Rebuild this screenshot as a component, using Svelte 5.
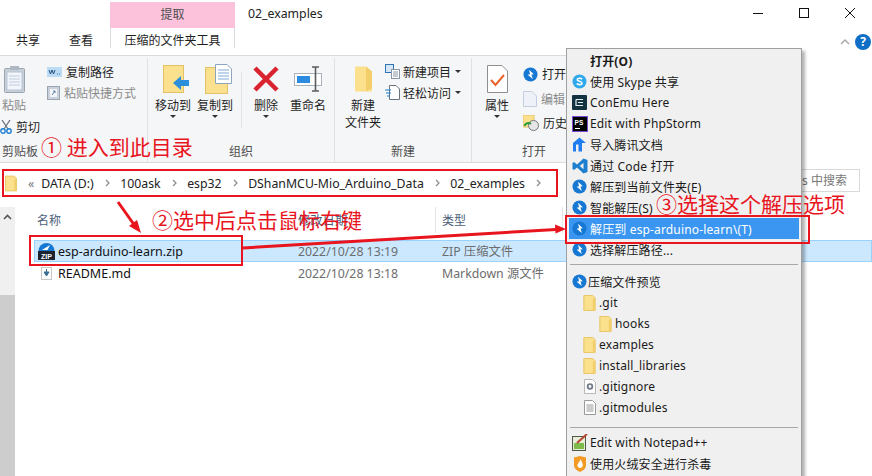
<script>
	const menuTop = [
		{ icon: "none", text: "打开(O)", bold: true },
		{ icon: "skype", text: "使用 Skype 共享" },
		{ icon: "conemu", text: "ConEmu Here" },
		{ icon: "storm", text: "Edit with PhpStorm" },
		{ icon: "tdocs", text: "导入腾讯文档" },
		{ icon: "code", text: "通过 Code 打开" },
		{ icon: "bz", text: "解压到当前文件夹(E)" },
		{ icon: "bz", text: "智能解压(S)" },
		{ icon: "bz", text: "解压到 esp-arduino-learn\\(T)", active: true },
		{ icon: "bz", text: "选择解压路径..." },
	];
	const preview = [
		{ icon: "folder", text: ".git", level: 1 },
		{ icon: "folder", text: "hooks", level: 2 },
		{ icon: "folder", text: "examples", level: 1 },
		{ icon: "folder", text: "install_libraries", level: 1 },
		{ icon: "gear", text: ".gitignore", level: 1 },
		{ icon: "doc", text: ".gitmodules", level: 1 },
	];
	const crumbs = ["DATA (D:)", "100ask", "esp32", "DShanMCU-Mio_Arduino_Data", "02_examples"];
</script>

{#snippet bz(size)}
	<svg width={size} height={size} viewBox="0 0 16 16">
		<circle cx="8" cy="8" r="7.5" fill="#1678d2" />
		<path d="M6.500 3 11.500 7.800 9 8 10.500 12.800 5 8.200 7.500 7.800Z" fill="#fff" />
	</svg>
{/snippet}

{#snippet folder(w, h)}
	<svg width={w} height={h} viewBox="0 0 13 17">
		<path d="M.5.5H10L12.5 3V16.5H.5Z" fill="#fbe08e" stroke="#e8c45e" />
		<path d="M10 4H12.5V16.5H10Z" fill="#f3cf6c" />
	</svg>
{/snippet}

{#snippet menuIcon(name)}
	{#if name === "bz"}
		{@render bz(15)}
	{:else if name === "skype"}
		<svg width="15" height="15" viewBox="0 0 15 15">
			<circle cx="7.500" cy="7.500" r="7" fill="#2fa9ec" />
			<path d="M10 5.200C9 3.900 5.200 3.900 5.200 5.700 5.200 7.600 10 7 10 9.200 10 11 6 11.100 4.800 9.600" fill="none" stroke="#fff" stroke-width="1.600" />
		</svg>
	{:else if name === "conemu"}
		<svg width="15" height="15" viewBox="0 0 15 15">
			<rect width="15" height="15" rx="1" fill="#12333f" />
			<path d="M4 4.500H11M4 4.500V10.500H11M6 7.500H11" fill="none" stroke="#e6f0f2" stroke-width="1.200" />
		</svg>
	{:else if name === "storm"}
		<svg width="16" height="16" viewBox="0 0 16 16">
			<rect x=".5" y=".5" width="15" height="15" fill="#000" stroke="#7a4bd0" />
			<text x="2.500" y="8.500" class="ps">PS</text>
			<path d="M3 12.500H8" stroke="#fff" />
		</svg>
	{:else if name === "tdocs"}
		<svg width="15" height="15" viewBox="0 0 15 15">
			<path d="M1 6 7.500 .5 14 6H10V14.500H6.500V7.500H4V14.500H1Z" fill="#1e7df0" />
		</svg>
	{:else if name === "code"}
		<svg width="16" height="16" viewBox="0 0 16 16">
			<path d="M11.500 .5 15.500 2V14L11.500 15.500 5 9.500 2 12 .5 11V5L2 4 5 6.500ZM11.500 4.800 7.800 8 11.500 11.200Z" fill="#1f7fcf" fill-rule="evenodd" />
		</svg>
	{:else if name === "folder"}
		{@render folder(13, 16)}
	{:else if name === "gear"}
		<svg width="12" height="15" viewBox="0 0 12 15">
			<path d="M.5.5H8.500L11.500 3.500V14.500H.5Z" fill="#fdfdfd" stroke="#b8b8b8" />
			<circle cx="6" cy="7.500" r="2.300" fill="none" stroke="#6f7c88" stroke-width="1.800" />
		</svg>
	{:else if name === "doc"}
		<svg width="12" height="15" viewBox="0 0 12 15">
			<path d="M.5.5H8.500L11.500 3.500V14.500H.5Z" fill="#fdfdfd" stroke="#9a9a9a" />
			<path d="M2.500 5H9.500M2.500 7H9.500M2.500 9H9.500M2.500 11H9.500" stroke="#9a9a9a" />
		</svg>
	{/if}
{/snippet}

<div class="window">
	<div class="titlebar">
		<div class="context-tab">提取</div>
		<div class="title">02_examples</div>
		<div class="controls">
			<svg width="12" height="12" viewBox="0 0 12 12"><path d="M1 6.500H11" stroke="#111" /></svg>
			<svg width="12" height="12" viewBox="0 0 12 12"><rect x="1.500" y="1.500" width="9" height="9" fill="none" stroke="#111" /></svg>
			<svg width="12" height="12" viewBox="0 0 12 12"><path d="M1 1 11 11M11 1 1 11" stroke="#111" /></svg>
		</div>
	</div>

	<div class="tabs">
		<span class="tab">共享</span>
		<span class="tab">查看</span>
		<span class="tab tool">压缩的文件夹工具</span>
		<svg class="collapse" width="10" height="6" viewBox="0 0 10 6"><path d="M1 5 5 1 9 5" fill="none" stroke="#a5a5a5" stroke-width="1.400" /></svg>
		<span class="help">?</span>
	</div>

	<div class="ribbon">
		<section class="group clipboard">
			<div class="body">
				<div class="col-a">
					<div class="big paste">
						<svg width="21" height="28" viewBox="0 0 21 28">
							<rect x=".5" y="3.500" width="20" height="24" rx="1" fill="#c7cfd8" stroke="#9aa5b0" />
							<rect x="3" y="7" width="15" height="18" fill="#f2f5f9" stroke="#b7c4d6" />
							<path d="M5 11H16M5 14H16M5 17H16M5 20H16" stroke="#bfcde0" />
							<rect x="6" y="1" width="9" height="4" fill="#aeb8c2" />
						</svg>
						<span class="muted">粘贴</span>
					</div>
					<div class="small cut">
						<svg width="12" height="14" viewBox="0 0 12 14">
							<path d="M2 0 8 9M10 0 4 9" stroke="#6b7480" stroke-width="1.300" />
							<circle cx="3" cy="11" r="2.200" fill="none" stroke="#1f7fd0" stroke-width="1.400" />
							<circle cx="9" cy="11" r="2.200" fill="none" stroke="#1f7fd0" stroke-width="1.400" />
						</svg>
						<span>剪切</span>
					</div>
				</div>
				<div class="col-b">
					<div class="small">
						<svg width="15" height="10" viewBox="0 0 15 10"><rect width="15" height="10" fill="#bcdcf5" /><path d="M2 3 3.500 7 5 3 6.500 7 8 3M10 7H10.800M12 7H12.800" fill="none" stroke="#23517c" /></svg>
						<span>复制路径</span>
					</div>
					<div class="small muted">
						<svg width="13" height="15" viewBox="0 0 13 15"><rect x=".5" y="1.500" width="12" height="13" fill="#c9d2dc" stroke="#9aa5b0" /><rect x="3" y="4" width="7" height="8" fill="#f3f5f8" /><path d="M5 10 8 6M6 6H8V8" fill="none" stroke="#5d7fa8" /></svg>
						<span>粘贴快捷方式</span>
					</div>
				</div>
			</div>
			<div class="label start">剪贴板</div>
		</section>

		<section class="group organize">
			<div class="body">
				<div class="big w36 shifted">
					<svg width="27" height="28" viewBox="0 0 27 28">
						<rect x=".5" y=".5" width="20" height="27" fill="#fbe08e" stroke="#e3c266" />
						<path d="M10 18 18 11V15H26V21H18V25Z" fill="#2b8fdc" />
					</svg>
					<span>移动到</span>
					<i class="caret"></i>
				</div>
				<div class="big w36 gap6 shifted">
					<svg width="27" height="30" viewBox="0 0 27 30">
						<rect x=".5" y="3.500" width="22" height="26" fill="#fbe08e" stroke="#e3c266" />
						<path d="M10.500 .5H22L26.500 5V19.500H10.500Z" fill="#fff" stroke="#8ea4bd" />
						<path d="M13 6H24M13 9H24M13 12H24M13 15H24" stroke="#7eaad6" />
					</svg>
					<span>复制到</span>
					<i class="caret"></i>
				</div>
				<div class="rule"></div>
				<div class="big w36 del">
					<svg width="26" height="26" viewBox="0 0 26 26"><path d="M2 2 24 24M24 2 2 24" stroke="#d9232e" stroke-width="4.500" /></svg>
					<span>删除</span>
					<i class="caret"></i>
				</div>
				<div class="big w36 rename">
					<svg width="29" height="26" viewBox="0 0 29 26">
						<rect x=".5" y="7.500" width="27" height="12" fill="#fff" stroke="#a8b0ba" />
						<rect x="3" y="10" width="13" height="7" fill="#2a8be0" />
						<path d="M18 1H25M18 25H25M21.500 1V25" fill="none" stroke="#5c5c5c" stroke-width="1.600" />
					</svg>
					<span>重命名</span>
				</div>
			</div>
			<div class="label">组织</div>
		</section>

		<section class="group create">
			<div class="body">
				<div class="big newfolder">
					<svg width="19" height="27" viewBox="0 0 19 27"><path d="M1 1H12L18 6V26H1Z" fill="#fbe08e" /><path d="M12 1 18 6V23L12 26Z" fill="#f3cf6c" /></svg>
					<span>新建<br />文件夹</span>
				</div>
				<div class="col-b">
					<div class="small">
						<svg width="15" height="15" viewBox="0 0 15 15"><rect x=".5" y=".5" width="8" height="8" fill="#d5e6f6" stroke="#2f74b5" /><rect x="6.500" y="5.500" width="8" height="9" fill="#fff" stroke="#8a96a3" /><path d="M8 8H13M8 10H13M8 12H13" stroke="#8a96a3" /></svg>
						<span>新建项目</span>
						<i class="caret inline"></i>
					</div>
					<div class="small">
						<svg width="15" height="15" viewBox="0 0 15 15"><path d="M4.500 .5H11L14.500 4V14.500H4.500Z" fill="#fff" stroke="#6b7480" /><path d="M0 5H6M1 8H6M2 11H5" stroke="#1f7fd0" /></svg>
						<span>轻松访问</span>
						<i class="caret inline"></i>
					</div>
				</div>
			</div>
			<div class="label">新建</div>
		</section>

		<section class="group open">
			<div class="body">
				<div class="big props">
					<svg width="21" height="28" viewBox="0 0 21 28"><path d="M.5.5H15L20.500 6V27.500H.5Z" fill="#fff" stroke="#8f8f8f" /><path d="M4 15 8.500 20 17 10" fill="none" stroke="#e8622a" stroke-width="2" /></svg>
					<span>属性</span>
					<i class="caret"></i>
				</div>
				<div class="col-c">
					<div class="small">{@render bz(15)}<span>打开</span></div>
					<div class="small muted">
						<svg width="14" height="16" viewBox="0 0 14 16"><path d="M.5.5H9L13.500 5V15.500H.5Z" fill="#eef2f8" stroke="#c3cede" /></svg>
						<span>编辑</span>
					</div>
					<div class="small">
						<svg width="16" height="16" viewBox="0 0 16 16"><rect width="11" height="12" fill="#fbe08e" stroke="#e3c266" /><circle cx="10.500" cy="10.500" r="5" fill="#e6e6e6" stroke="#767676" /><path d="M1.500 11A4 4 0 0 1 8 9" fill="none" stroke="#2c9a3e" stroke-width="2" /></svg>
						<span>历史</span>
					</div>
				</div>
			</div>
			<div class="label open-label">打开</div>
		</section>
	</div>

	<div class="navrow">
		<div class="address">
			{@render folder(12, 17)}
			<span class="back">«</span>
			{#each crumbs as crumb}
				<span>{crumb}</span>
				<svg class="sep" width="5" height="8" viewBox="0 0 5 8"><path d="M1 1 4 4 1 7" fill="none" stroke="#8a8a8a" stroke-width="1.200" /></svg>
			{/each}
		</div>
		<div class="search">在 02_examples 中搜索</div>
	</div>

	<div class="content">
		<div class="scrollbar">
			<div class="track">
				<svg width="9" height="6" viewBox="0 0 9 6"><path d="M1 5 4.500 1.500 8 5" fill="none" stroke="#555" stroke-width="1.600" /></svg>
			</div>
			<div class="thumb"></div>
		</div>
		<div class="files">
			<div class="head">
				<span class="c-name">名称</span>
				<span class="c-date">修改日期</span>
				<span class="c-type">类型</span>
			</div>
			<div class="row selected">
				<span class="c-name">
					<svg width="17" height="18" viewBox="0 0 17 18">
						<path d="M.5 9A8 8 0 0 1 16.500 9Z" fill="#1678d2" />
						<path d="M4 8 12 3 9.500 8Z" fill="#fff" />
						<rect y="9" width="17" height="9" fill="#1c2430" />
						<text x="8.500" y="16.500" class="zip">ZIP</text>
					</svg>
					esp-arduino-learn.zip
				</span>
				<span class="c-date">2022/10/28 13:19</span>
				<span class="c-type">ZIP 压缩文件</span>
			</div>
			<div class="row">
				<span class="c-name">
					<svg class="readme" width="11" height="13" viewBox="0 0 11 13">
						<rect x=".5" y=".5" width="10" height="12" fill="#fff" stroke="#c8c8c8" />
						<path d="M5.500 2V5M3 5H8L5.500 9Z" fill="#3b6f95" stroke="#3b6f95" />
					</svg>
					README.md
				</span>
				<span class="c-date">2022/10/28 13:18</span>
				<span class="c-type">Markdown 源文件</span>
			</div>
		</div>
	</div>

	<div class="menu">
		{#each menuTop as item}
			<div class="item" class:active={item.active} class:bold={item.bold}>
				<span class="ico">{@render menuIcon(item.icon)}</span>
				<span>{item.text}</span>
			</div>
		{/each}
		<div class="divider"></div>
		<div class="item tight">
			<span class="ico">{@render bz(15)}</span>
			<span>压缩文件预览</span>
		</div>
		{#each preview as item}
			<div class="item" class:lvl1={item.level === 1} class:lvl2={item.level === 2}>
				<span class="tree-ico">{@render menuIcon(item.icon)}</span>
				<span>{item.text}</span>
			</div>
		{/each}
		<div class="divider second"></div>
		<div class="item">
			<span class="ico">
				<svg width="16" height="17" viewBox="0 0 16 17">
					<rect x=".5" y="2.500" width="13" height="14" fill="#e8ecd8" stroke="#4b5a44" />
					<rect x="2" y="9" width="10" height="6" fill="#7dbb4a" />
					<path d="M5 9 15 0" stroke="#b8452f" stroke-width="2" />
				</svg>
			</span>
			<span>Edit with Notepad++</span>
		</div>
		<div class="item">
			<span class="ico">
				<svg width="14" height="16" viewBox="0 0 14 16">
					<path d="M1 1.500 7 0 13 1.500V9C13 13 9 15 7 16 5 15 1 13 1 9Z" fill="#f29a24" />
					<path d="M7 3C9 6 10.500 8 9.500 10.500 9 12.500 5 12.500 4.500 10 4 8.500 5.500 7.500 5.500 6.500 6.500 6.500 7 5 7 3Z" fill="#fff" />
				</svg>
			</span>
			<span>使用火绒安全进行杀毒</span>
		</div>
	</div>

	<div class="mark box-address"></div>
	<div class="mark box-file"></div>
	<div class="mark box-item"></div>
	<div class="note note-1">① 进入到此目录</div>
	<div class="note note-2">②选中后点击鼠标右键</div>
	<div class="note note-3">③选择这个解压选项</div>
	<svg class="arrows" width="872" height="476" viewBox="0 0 872 476">
		<path d="M118 202 135 226" stroke="#e8141e" stroke-width="3" />
		<path d="M141 233 129 226 137 220Z" fill="#e8141e" />
		<path d="M243 248 556 229.500" stroke="#e8141e" stroke-width="3" />
		<path d="M566 229 555 224.500 555.500 233.500Z" fill="#e8141e" />
	</svg>
</div>

<style>
	:global(body) {
		margin: 0;
		background: #fff;
	}
	.window {
		position: relative;
		width: 872px;
		height: 476px;
		overflow: hidden;
		background: #fff;
		color: #1e1e1e;
		font-family: "Noto Sans", "Noto Sans CJK SC", sans-serif;
		font-size: 12px;
	}
	.titlebar {
		display: flex;
		height: 28px;
		padding-top: 2px;
		box-sizing: border-box;
	}
	.context-tab {
		width: 125px;
		margin-left: 110px;
		background: #fcc2dc;
		color: #4f4f4f;
		line-height: 26px;
		text-align: center;
	}
	.title {
		margin-left: 13px;
		line-height: 24px;
		font-size: 12.300px;
		color: #222;
	}
	.controls {
		display: flex;
		gap: 34px;
		margin-left: auto;
		margin-right: 16px;
		padding-top: 5px;
	}
	.controls svg {
		display: block;
	}
	.tabs {
		position: relative;
		display: flex;
		height: 20px;
		margin-bottom: 7px;
		line-height: 26px;
	}
	.tab {
		margin-left: 16px;
		margin-right: 13px;
	}
	.tab.tool {
		box-sizing: border-box;
		width: 125px;
		height: 20px;
		margin: 0 0 0 4px;
		overflow: hidden;
		text-align: center;
		border: 1px solid #dadbdc;
		border-width: 0 1px;
		line-height: 26px;
	}
	.collapse {
		margin-left: auto;
		margin-right: 5px;
		margin-top: 11px;
	}
	.help {
		width: 16px;
		height: 16px;
		margin-top: 6px;
		margin-right: 1px;
		border-radius: 50%;
		background: #0f6fc6;
		color: #fff;
		font-weight: 700;
		font-size: 12px;
		line-height: 16px;
		text-align: center;
	}
	.ribbon {
		display: flex;
		width: 600px;
		height: 108px;
		box-sizing: border-box;
		background: #f5f6f7;
		border-top: 1px solid #dadbdc;
		border-bottom: 1px solid #dadbdc;
	}
	.group {
		display: flex;
		flex-direction: column;
		flex: none;
		box-sizing: border-box;
		height: 104px;
		margin-top: 2px;
		border-right: 1px solid #dfe1e4;
	}
	.body {
		display: flex;
		height: 84px;
		padding-top: 2px;
		box-sizing: border-box;
		flex: none;
	}
	.label {
		text-align: center;
		color: #4f4f4f;
		line-height: 16px;
		margin-top: 2px;
	}
	.label.start {
		text-align: left;
		padding-left: 2px;
	}
	.clipboard {
		width: 148px;
	}
	.organize {
		width: 187px;
	}
	.create {
		width: 137px;
	}
	.open {
		width: 128px;
		border-right: 0;
	}
	.open-label {
		text-align: left;
		padding-left: 50px;
	}
	.col-a {
		width: 47px;
		flex: none;
	}
	.col-b {
		display: flex;
		flex-direction: column;
		padding-top: 1px;
	}
	.col-c {
		display: flex;
		flex-direction: column;
		padding-top: 4px;
		gap: 4.500px;
		margin-left: 14px;
	}
	.big {
		display: flex;
		flex-direction: column;
		align-items: center;
		flex: none;
		padding-top: 4px;
	}
	.big svg {
		display: block;
		height: 30px;
	}
	.big span {
		margin-top: 3px;
		line-height: 17px;
		text-align: center;
		white-space: nowrap;
	}
	.paste {
		width: 28px;
	}
	.w36 {
		width: 36px;
		margin-left: 7px;
	}
	.w36.gap6 {
		margin-left: 6px;
	}
	.shifted svg {
		margin-left: 7px;
	}
	.rule {
		width: 1px;
		height: 56px;
		margin: 12px 0 0 8px;
		background: #e2e4e7;
		flex: none;
	}
	.del {
		margin-left: 6px;
	}
	.rename {
		margin-left: 6px;
	}
	.newfolder {
		margin-left: 10px;
		width: 36px;
	}
	.newfolder span {
		line-height: 17px;
	}
	.props {
		margin-left: 13px;
		width: 24px;
	}
	.small {
		display: flex;
		align-items: center;
		gap: 4px;
		height: 21px;
		white-space: nowrap;
	}
	.col-c .small {
		height: 20px;
	}
	.col-b .small svg {
		flex: none;
	}
	.create .col-b {
		margin-left: 4px;
	}
	.create .col-b .small {
		gap: 3px;
	}
	.cut {
		margin-top: 2px;
		gap: 4px;
	}
	.muted {
		color: #8a8a8a;
	}
	.caret {
		display: block;
		width: 0;
		height: 0;
		margin-top: 1px;
		border: 3px solid transparent;
		border-top-color: #333;
		border-bottom: 0;
	}
	.caret.inline {
		margin-top: 0;
		margin-left: 1px;
	}
	.navrow {
		display: flex;
		height: 44px;
		padding: 7px 12px 0 5px;
		box-sizing: border-box;
	}
	.address {
		display: flex;
		align-items: center;
		width: 551px;
		height: 26px;
		white-space: nowrap;
		font-size: 12.300px;
		color: #222;
	}
	.address span {
		margin-right: 11.500px;
	}
	.address .back {
		margin-left: 11px;
		margin-right: 7px;
		color: #777;
	}
	.address .sep {
		margin-right: 10px;
	}
	.search {
		margin-left: auto;
		width: 200px;
		height: 23px;
		margin-top: -1px;
		box-sizing: border-box;
		padding-right: 12px;
		border: 1px solid #d9d9d9;
		text-align: right;
		line-height: 21px;
		color: #777;
	}
	.content {
		display: flex;
		height: 269px;
	}
	.scrollbar {
		display: flex;
		flex-direction: column;
		width: 15px;
		flex: none;
	}
	.track {
		height: 88px;
		background: #f0f0f0;
		display: flex;
		justify-content: center;
		padding-top: 7px;
		box-sizing: border-box;
	}
	.track svg {
		display: block;
	}
	.thumb {
		flex: 1;
		background: #cdcdcd;
	}
	.files {
		flex: 1;
		padding-left: 19px;
	}
	.head {
		display: flex;
		height: 26px;
		margin-bottom: 7px;
		color: #4c607a;
		line-height: 27px;
	}
	.head .c-name {
		padding-left: 3px;
	}
	.head .c-date {
		border-right: 1px solid #e5e5e5;
	}
	.head .c-type {
		width: 120px;
		padding-left: 6px;
		flex: none;
		border-right: 1px solid #e5e5e5;
	}
	.row {
		display: flex;
		align-items: center;
		height: 22px;
		color: #6d6d6d;
	}
	.row.selected {
		box-sizing: border-box;
		background: #cce8ff;
		border: 1px solid #99d1ff;
	}
	.c-name {
		display: flex;
		align-items: center;
		gap: 4px;
		box-sizing: border-box;
		width: 264px;
		flex: none;
		color: #111;
		font-size: 12.500px;
	}
	.head .c-name {
		font-size: 12px;
		color: #4c607a;
	}
	.c-date {
		width: 137px;
		flex: none;
		font-size: 12.300px;
	}
	.row .c-type {
		padding-left: 7px;
		font-size: 12.300px;
	}
	.readme {
		margin-left: 7px;
		margin-right: 2px;
	}
	.selected svg {
		margin-left: 3px;
		margin-right: -1px;
	}
	.selected .c-name {
		width: 263px;
	}
	.zip {
		font: 700 7px "Liberation Sans", sans-serif;
		fill: #fff;
		text-anchor: middle;
	}
	.ps {
		font: 700 6.500px "Liberation Sans", sans-serif;
		fill: #fff;
	}
	.menu {
		position: absolute;
		left: 566px;
		top: 48px;
		width: 236px;
		height: 440px;
		box-sizing: border-box;
		padding: 1px 2px;
		background: #f0f0f0;
		border: 1px solid #a0a0a0;
		box-shadow: 3px 3px 3px rgba(0, 0, 0, 0.3);
		font-size: 12px;
		letter-spacing: 0.150px;
		color: #1a1a1a;
	}
	.item {
		display: flex;
		align-items: center;
		height: 21px;
		white-space: nowrap;
	}
	.item.bold {
		font-weight: 700;
	}
	.item.active {
		background: #3a96f0;
		color: #fff;
	}
	.ico {
		display: flex;
		justify-content: center;
		align-items: center;
		width: 21px;
		flex: none;
	}
	.ico svg,
	.tree-ico svg {
		display: block;
	}
	.item.tight .ico {
		margin-right: -2px;
	}
	.tree-ico {
		display: flex;
		justify-content: center;
		width: 13px;
		margin-right: 3px;
		flex: none;
	}
	.lvl1 {
		padding-left: 14px;
	}
	.lvl2 {
		padding-left: 30px;
	}
	.divider {
		height: 1px;
		margin: 4px 1px 6px;
		background: #a8a8a8;
	}
	.divider.second {
		margin: 9px 1px 4px;
	}
	.mark {
		position: absolute;
		box-sizing: border-box;
		border: 2px solid #e8141e;
	}
	.box-address {
		left: 2px;
		top: 169px;
		width: 556px;
		height: 28px;
	}
	.box-file {
		left: 29px;
		top: 235px;
		width: 214px;
		height: 31px;
	}
	.box-item {
		left: 565px;
		top: 215px;
		width: 245px;
		height: 29px;
	}
	.note {
		position: absolute;
		color: #e8141e;
		font-family: "Noto Sans CJK SC", sans-serif;
		font-size: 21px;
		line-height: 28px;
		white-space: nowrap;
	}
	.note-1 {
		left: 41px;
		top: 132px;
	}
	.note-2 {
		left: 152px;
		top: 205px;
	}
	.note-3 {
		left: 656px;
		top: 189px;
	}
	.arrows {
		position: absolute;
		left: 0;
		top: 0;
		pointer-events: none;
	}
</style>
